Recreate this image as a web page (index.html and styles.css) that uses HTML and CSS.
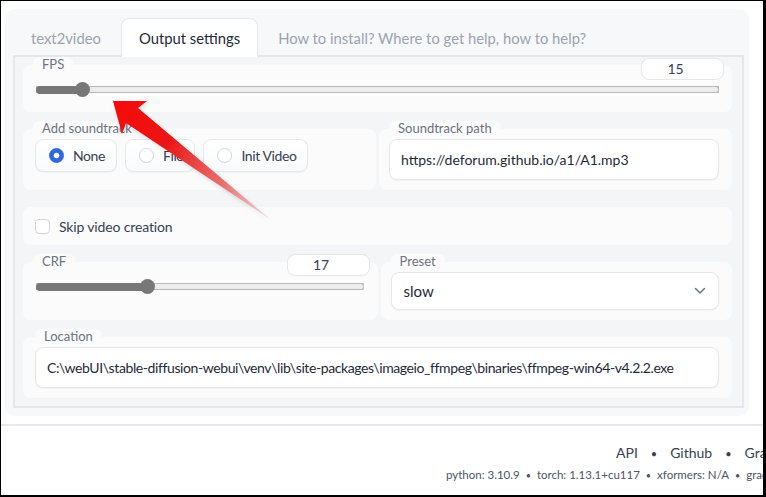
FILE: index.html
```html
<!DOCTYPE html>
<html lang="en">
<head>
    <meta charset="UTF-8">
    <meta name="viewport" content="width=device-width, initial-scale=1.0">
    <title>Deforum - Output settings</title>
    <link rel="stylesheet" href="styles.css">
</head>
<body>
    <div class="frame">
        <div class="app">
            <div class="panel">
                <!-- Tabs -->
                <div class="tabs">
                    <div class="tab">text2video</div>
                    <div class="tab active">Output settings</div>
                    <div class="tab">How to install? Where to get help, how to help?</div>
                </div>

                <div class="tab-content">
                    <!-- FPS -->
                    <div class="block slider-block">
                        <div class="block-head">
                            <span class="block-label">FPS</span>
                            <div class="number fps-number">15</div>
                        </div>
                        <div class="slider">
                            <div class="slider-fill" style="width: 6.7%"></div>
                            <span class="slider-thumb"></span>
                        </div>
                    </div>

                    <!-- Soundtrack -->
                    <div class="row">
                        <div class="block field-block">
                            <span class="block-label">Add soundtrack</span>
                            <div class="radios">
                                <div class="radio-option"><span class="radio checked"></span>None</div>
                                <div class="radio-option"><span class="radio"></span>File</div>
                                <div class="radio-option"><span class="radio"></span>Init Video</div>
                            </div>
                        </div>
                        <div class="block field-block">
                            <span class="block-label">Soundtrack path</span>
                            <div class="text-input">https://deforum.github.io/a1/A1.mp3</div>
                        </div>
                    </div>

                    <!-- Skip video -->
                    <div class="block check-block">
                        <span class="checkbox"></span>
                        <span>Skip video creation</span>
                    </div>

                    <!-- CRF / Preset -->
                    <div class="row">
                        <div class="block slider-block crf-block">
                            <div class="block-head">
                                <span class="block-label">CRF</span>
                                <div class="number">17</div>
                            </div>
                            <div class="slider">
                                <div class="slider-fill" style="width: 34%"></div>
                                <span class="slider-thumb"></span>
                            </div>
                        </div>
                        <div class="block field-block">
                            <span class="block-label">Preset</span>
                            <div class="dropdown">
                                <span>slow</span>
                                <svg width="12" height="8" viewBox="0 0 12 8"><path d="M1.5 1.5 L6 6 L10.5 1.5" fill="none" stroke="#6b7280" stroke-width="1.5" stroke-linecap="round" stroke-linejoin="round"/></svg>
                            </div>
                        </div>
                    </div>

                    <!-- Location -->
                    <div class="block field-block location-block">
                        <span class="block-label">Location</span>
                        <div class="text-input path-text">C:\webUI\stable-diffusion-webui\venv\lib\site-packages\imageio_ffmpeg\binaries\ffmpeg-win64-v4.2.2.exe</div>
                    </div>
                </div>
            </div>
        </div>

        <!-- Footer -->
        <div class="footer">
            <div class="footer-links">
                <span>API</span><span class="dot">&bull;</span><span>Github</span><span class="dot">&bull;</span><span>Gradio</span><span class="dot">&bull;</span><span>Reload UI</span>
            </div>
            <div class="versions">
                <span>python: 3.10.9</span><span class="dot">&bull;</span><span>torch: 1.13.1+cu117</span><span class="dot">&bull;</span><span>xformers: N/A</span><span class="dot">&bull;</span><span>gradio: 3.16.2</span>
            </div>
        </div>

        <!-- Annotation arrow -->
        <svg class="arrow" width="766" height="497" viewBox="0 0 766 497">
            <defs>
                <linearGradient id="arrowFill" x1="113" y1="101" x2="270" y2="219" gradientUnits="userSpaceOnUse">
                    <stop offset="0" stop-color="#f50a0a"/>
                    <stop offset="0.35" stop-color="#ec1515"/>
                    <stop offset="0.7" stop-color="#e85a5a" stop-opacity="0.85"/>
                    <stop offset="1" stop-color="#f0b0b0" stop-opacity="0.5"/>
                </linearGradient>
            </defs>
            <polygon points="113,101 147,101 138,108 270,219 126,123 122,134" fill="url(#arrowFill)"/>
        </svg>
    </div>
</body>
</html>
```

FILE: styles.css
```css
* {
    margin: 0;
    padding: 0;
    box-sizing: border-box;
    font-family: Lato, "Noto Sans", sans-serif;
}

body {
    background-color: #fff;
    overflow: hidden;
}

.frame {
    position: relative;
    width: 766px;
    height: 497px;
    border-style: solid;
    border-color: #000;
    border-width: 1px 3px 2px 1px;
    overflow: hidden;
    background: #fff;
}

.app {
    padding: 8px 14px 0 4px;
}

.panel {
    background: #f7f8fa;
    border-radius: 10px;
    padding: 9px 5px 8px 8px;
}

/* Tabs */
.tabs {
    display: flex;
    height: 39px;
    margin-bottom: -2px;
    position: relative;
    z-index: 1;
}

.tab {
    padding: 0 17px 0 17px;
    font-size: 14.8px;
    line-height: 38px;
    color: #9ca3af;
    white-space: nowrap;
    border: 1px solid transparent;
    border-bottom: none;
}

.tab.active {
    background: #fff;
    color: #1f2937;
    border-color: #e5e7eb;
    border-radius: 8px 8px 0 0;
    margin-left: 2px;
    margin-right: 2px;
}

.tab-content {
    background: #f4f5f7;
    border: 2px solid #e5e7eb;
    padding: 8px 10px 8px 8px;
    display: flex;
    flex-direction: column;
    gap: 17px;
}

.row {
    display: flex;
    gap: 3px;
}

.row > .block {
    flex: 1;
}

.block {
    background: #fbfbfc;
    border-radius: 8px;
}

.block-label {
    display: inline-block;
    background: #fbfbfc;
    border-radius: 6px 6px 0 0;
    padding: 0 9px;
    margin-top: -8px;
    margin-left: 10px;
    font-size: 13px;
    line-height: 15px;
    height: 15px;
    color: #6b7280;
}

/* Sliders */
.slider-block {
    padding: 0 13px 15px;
}

.block-head {
    display: flex;
    justify-content: space-between;
    align-items: flex-start;
    margin: -8px -5px 0 -3px;
    height: 23px;
}

.block-head .block-label {
    margin: 0;
}

.number {
    width: 83px;
    height: 22px;
    background: #fff;
    border: 1px solid #e5e7eb;
    border-radius: 8px;
    font-size: 14px;
    line-height: 20px;
    color: #374151;
    text-align: center;
    padding-right: 14px;
}

.fps-number {
    margin-top: 1px;
}

.slider {
    display: flex;
    align-items: center;
    height: 15px;
    margin-top: 2px;
    background: linear-gradient(#b9b9b9, #b9b9b9) center / 100% 7px no-repeat;
    border-radius: 4px;
    position: relative;
}

.slider::after {
    content: "";
    position: absolute;
    left: 1px;
    right: 1px;
    top: 5px;
    height: 5px;
    background: #ececec;
    border-radius: 3px;
}

.slider-fill {
    height: 8px;
    background: #777;
    border-radius: 4px 0 0 4px;
    position: relative;
    z-index: 1;
}

.slider-thumb {
    width: 15px;
    height: 15px;
    margin-left: -7px;
    border-radius: 50%;
    background: #777;
    position: relative;
    z-index: 1;
}

.crf-block .slider {
    margin-right: 1px;
}

/* Labelled fields */
.field-block {
    padding: 0 13px 10px 10px;
    display: flex;
    flex-direction: column;
    align-items: flex-start;
}

.field-block .block-label {
    margin-left: 0;
    margin-bottom: 3px;
}

.radios {
    display: flex;
    gap: 8px;
    padding-left: 2px;
}

.radio-option {
    display: flex;
    align-items: center;
    gap: 9px;
    height: 33px;
    padding: 0 11px 0 13px;
    border: 1px solid #e5e7eb;
    border-radius: 8px;
    background: linear-gradient(#fff, #f9fafb);
    box-shadow: 0 1px 2px rgba(0, 0, 0, 0.04);
    font-size: 14px;
    letter-spacing: -0.4px;
    color: #374151;
}

.radio {
    width: 15px;
    height: 15px;
    border-radius: 50%;
    border: 1px solid #d1d5db;
    background: #fff;
}

.radio.checked {
    border-color: #2e68e0;
    background: radial-gradient(circle, #fff 2.4px, #2e68e0 3.2px);
}

.text-input,
.dropdown {
    width: 100%;
    height: 41px;
    background: #fff;
    border: 1px solid #e5e7eb;
    border-radius: 8px;
    box-shadow: 0 1px 2px rgba(0, 0, 0, 0.04);
    padding: 0 11px;
    font-size: 14px;
    line-height: 39px;
    color: #1f2937;
    white-space: nowrap;
    overflow: hidden;
}

.path-text {
    letter-spacing: -0.4px;
}

.dropdown {
    height: 38px;
    line-height: 36px;
    padding: 0 12px;
    font-size: 15px;
    display: flex;
    justify-content: space-between;
    align-items: center;
}

.location-block {
    padding-left: 12px;
}

/* Checkbox */
.check-block {
    display: flex;
    align-items: center;
    gap: 9px;
    height: 38px;
    padding-left: 12px;
    font-size: 14px;
    letter-spacing: -0.15px;
    color: #374151;
}

.checkbox {
    width: 15px;
    height: 15px;
    border: 1px solid #d1d5db;
    border-radius: 4px;
    background: #fff;
}

/* Footer */
.footer {
    margin-top: 8px;
    border-top: 2px solid #e5e7eb;
    white-space: nowrap;
}

.footer-links {
    margin-top: 18px;
    padding-left: 615px;
    font-size: 14px;
    color: #374151;
}

.footer-links .dot {
    margin: 0 13px;
    font-size: 11px;
}

.versions {
    margin-top: 7px;
    padding-left: 445px;
    font-size: 11.5px;
    color: #4b5563;
}

.versions .dot {
    margin: 0 6px;
    font-size: 9px;
}

/* Annotation overlay */
.arrow {
    position: absolute;
    left: -1px;
    top: -1px;
    pointer-events: none;
    filter: drop-shadow(1px 2px 2px rgba(0, 0, 0, 0.15));
}
```
